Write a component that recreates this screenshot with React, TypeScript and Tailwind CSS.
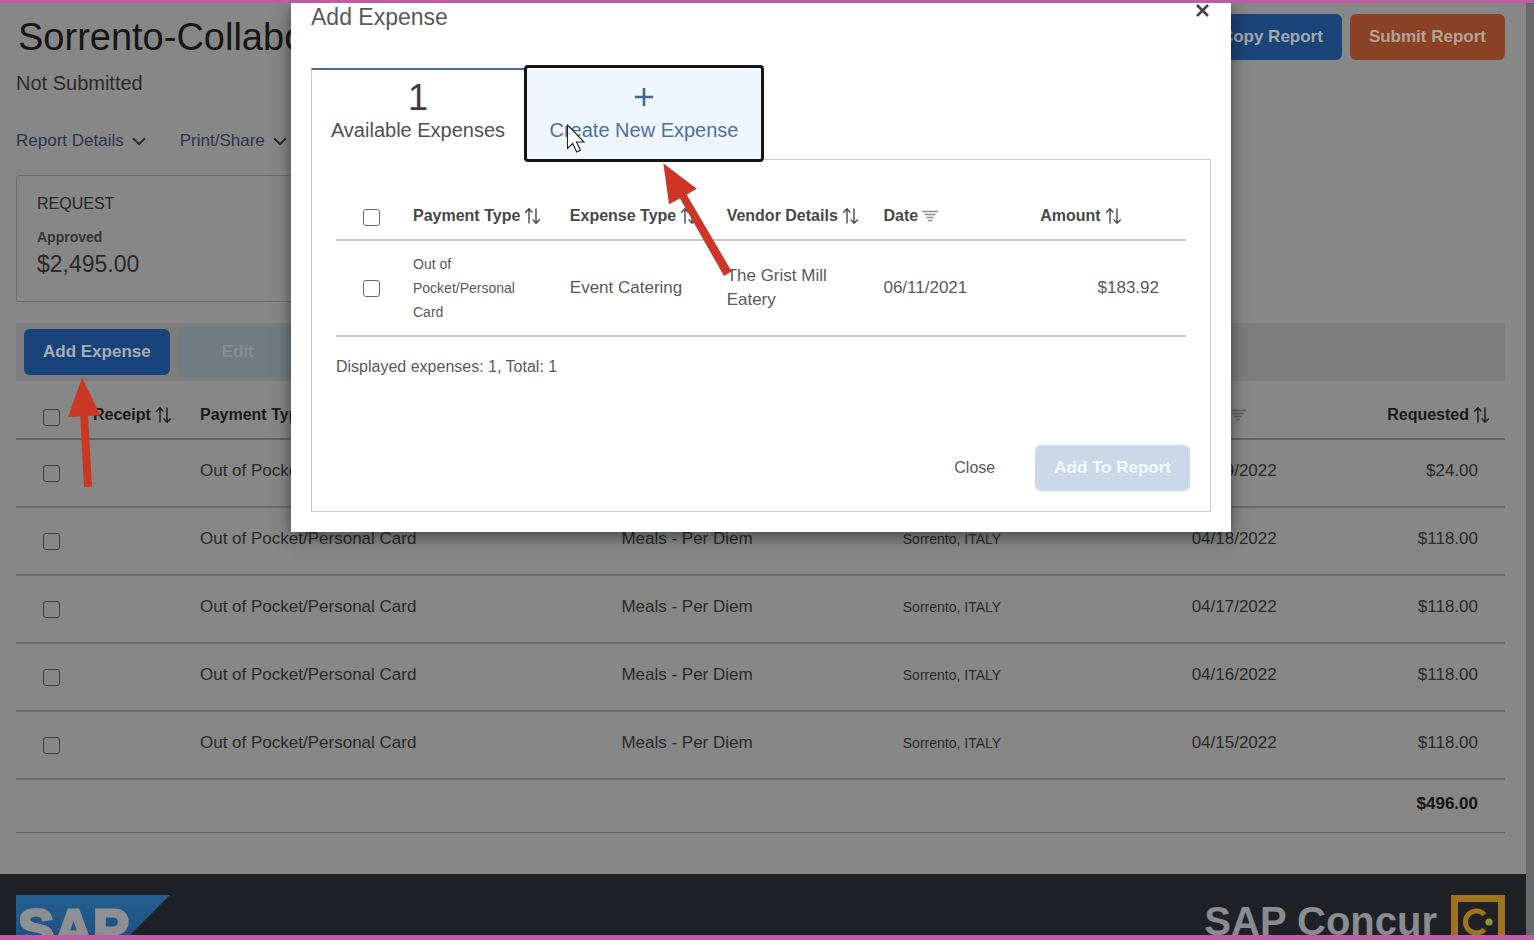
import React from "react";

type Expense = { payment: string; type: string; vendor: string; date: string; amount: string };

const perDiem = (date: string, amount = "$118.00"): Expense => ({
  payment: "Out of Pocket/Personal Card",
  type: "Meals - Per Diem",
  vendor: "Sorrento, ITALY",
  date,
  amount,
});

const expenses: Expense[] = [
  perDiem("04/19/2022", "$24.00"),
  perDiem("04/18/2022"),
  perDiem("04/17/2022"),
  perDiem("04/16/2022"),
  perDiem("04/15/2022"),
];

function SortIcon() {
  return (
    <svg width="17" height="18" viewBox="0 0 17 18" fill="none" stroke="currentColor" strokeWidth="1.4" aria-hidden="true">
      <path d="M5 16.5V2M1.2 5.8L5 1.8l3.4 3.8" />
      <path d="M12 1.5V16M8.6 12.4l3.4 3.8 3.8-3.8" />
    </svg>
  );
}

function FilterIcon() {
  return (
    <svg width="16" height="14" viewBox="0 0 16 14" fill="none" stroke="currentColor" strokeWidth="1.4" aria-hidden="true">
      <path d="M0 2.5h16M2.5 5.5h11M4.5 8.5h7M6 11.5h4" />
    </svg>
  );
}

function Chevron() {
  return (
    <svg width="14" height="9" viewBox="0 0 14 9" fill="none" stroke="#262b33" strokeWidth="2" aria-hidden="true">
      <path d="M1 1.2l6 6 6-6" />
    </svg>
  );
}

function Tick({ label, dim = false }: { label: string; dim?: boolean }) {
  return (
    <input
      type="checkbox"
      aria-label={label}
      className={
        dim
          ? "block size-[17px] appearance-none rounded-[3px] border border-[#3c3c3c]"
          : "block size-[17px] appearance-none rounded-[3px] border border-[#6a6a6a] bg-white"
      }
    />
  );
}

function Heading({ children, icon }: { children: React.ReactNode; icon: "sort" | "filter" }) {
  return (
    <span className="inline-flex items-center gap-1 whitespace-nowrap">
      {children}
      {icon === "sort" ? <SortIcon /> : <span className="text-[#8c8c8c]"><FilterIcon /></span>}
    </span>
  );
}

function ReportPage() {
  return (
    <main className="shrink-0 pr-[21px] pl-4 pt-[11px]">
      <header className="flex items-center justify-between">
        <h1 className="pl-[2px] text-[38px] leading-[46px] text-[#161616]">Sorrento-Collaboration</h1>
        <div className="flex gap-2">
          <button className="h-[46px] rounded-md bg-[#1b4478] px-[19px] text-[17px] font-bold text-[#a3a8af]">Copy Report</button>
          <button className="h-[46px] rounded-md bg-[#8a4324] px-[19px] text-[17px] font-bold text-[#b5a297]">Submit Report</button>
        </div>
      </header>
      <p className="mt-[11px] text-xl leading-6 text-[#2b2b2b]">Not Submitted</p>
      <nav className="mt-[34px] flex gap-[34px] text-[17px] leading-6 text-[#27364f]">
        <a href="#details" className="flex items-center gap-2">Report Details <Chevron /></a>
        <a href="#print" className="flex items-center gap-2">Print/Share <Chevron /></a>
      </nav>
      <section className="mt-[22px] w-1/3 rounded-[3px] border border-[#6d6d6d] px-5 pt-4 pb-5 text-[#2a2a2a]">
        <h2 className="text-base leading-6 text-[#262626]">REQUEST</h2>
        <p className="mt-[11px] text-sm leading-5 font-bold text-[#353535]">Approved</p>
        <p className="text-[23px] leading-[34px]">$2,495.00</p>
      </section>
      <div className="mt-[21px] flex h-[58px] items-center gap-2 bg-[#7d7d7d] px-2">
        <button className="h-[46px] rounded-md bg-[#17437a] px-[19px] text-[17px] font-bold text-[#a9adb2]">Add Expense</button>
        <button disabled className="h-[50px] w-[120px] rounded-md bg-[#727a84] text-[17px] font-bold text-[#868d95]">Edit</button>
      </div>
      <table className="w-full table-fixed text-left text-base text-[#2a2a2a]">
        <colgroup>
          <col className="w-[77px]" />
          <col className="w-[107px]" />
          <col className="w-[28.3%]" />
          <col className="w-[18.9%]" />
          <col className="w-[19.4%]" />
          <col className="w-[10%]" />
          <col />
        </colgroup>
        <thead>
          <tr className="h-[58px] border-b-2 border-[#646464] text-base text-[#1a1a1a]">
            <th className="pt-4 pl-[27px]"><Tick dim label="Select all expenses" /></th>
            <th className="pt-2.5"><Heading icon="sort">Receipt</Heading></th>
            <th className="pt-2.5"><Heading icon="sort">Payment Type</Heading></th>
            <th className="pt-2.5"><Heading icon="sort">Expense Type</Heading></th>
            <th className="pt-2.5"><Heading icon="sort">Vendor Details</Heading></th>
            <th className="pt-2.5"><span className="[&_span_span]:text-[#5c5c5c]"><Heading icon="filter">Date</Heading></span></th>
            <th className="pt-2.5 pr-[15px] text-right"><Heading icon="sort">Requested</Heading></th>
          </tr>
        </thead>
        <tbody>
          {expenses.map((e) => (
            <tr key={e.date} className="h-[68px] border-b-2 border-[#6a6a6a] text-[17px]">
              <td className="pl-[27px]"><Tick dim label={"Select expense of " + e.date} /></td>
              <td />
              <td className="pb-1">{e.payment}</td>
              <td className="pb-1">{e.type}</td>
              <td className="pb-1 text-sm">{e.vendor}</td>
              <td className="pb-1">{e.date}</td>
              <td className="pr-[27px] pb-1 text-right">{e.amount}</td>
            </tr>
          ))}
        </tbody>
        <tfoot>
          <tr className="h-[53px] border-b border-[#646464] text-[17px] font-bold text-[#141414]">
            <td colSpan={7} className="pr-[27px] pb-1 text-right">$496.00</td>
          </tr>
        </tfoot>
      </table>
    </main>
  );
}

function Footer() {
  return (
    <footer className="mt-[41px] flex min-h-0 flex-1 items-start justify-between overflow-hidden bg-[#1e2125] pt-[21px] pr-[21px] pl-4">
      <svg className="shrink-0" width="154" height="77" viewBox="0 0 154 77" role="img" aria-label="SAP">
        <defs>
          <linearGradient id="sap" x1="0" y1="0" x2="0" y2="1">
            <stop offset="0" stopColor="#235f91" />
            <stop offset="1" stopColor="#1a4673" />
          </linearGradient>
        </defs>
        <path d="M0 0h154L77 77H0z" fill="url(#sap)" />
        <text x="2" y="52" fontFamily="Liberation Sans, sans-serif" fontWeight="700" fontSize="54" fill="#8e8f92" stroke="#8e8f92" strokeWidth="3">SAP</text>
      </svg>
      <div className="flex shrink-0 items-start gap-[14px]">
        <span className="pt-[6px] text-[40px] leading-10 font-bold text-[#8b8c8f]">SAP Concur</span>
        <svg width="54" height="54" viewBox="0 0 54 54" role="img" aria-label="Concur">
          <rect x="3.5" y="3.5" width="47" height="47" fill="none" stroke="#a0741e" strokeWidth="7" />
          <path d="M33.5 19.5a11 11 0 1 0 0 15" fill="none" stroke="#a0741e" strokeWidth="5" />
          <circle cx="38" cy="27" r="3.6" fill="#8f9a26" />
        </svg>
      </div>
    </footer>
  );
}

function AddExpenseDialog() {
  return (
    <section
      role="dialog"
      aria-label="Add Expense"
      className="absolute top-[3px] right-[303px] left-[291px] bg-white px-5 pb-5 text-[#595959] shadow-[0_4px_16px_rgba(0,0,0,0.5)]"
    >
      <header className="flex h-[65px] items-start justify-between">
        <h2 className="text-[23px] leading-7">Add Expense</h2>
        <button aria-label="Close dialog" className="pt-[1px] pr-[2px] text-[#444]">
          <svg width="13" height="13" viewBox="0 0 13 13" fill="none" stroke="currentColor" strokeWidth="2.6">
            <path d="M1 1l11 11M12 1L1 12" />
          </svg>
        </button>
      </header>
      <div role="tablist" className="relative z-10 flex items-end gap-[3px]">
        <button role="tab" aria-selected="true" className="flex h-[92px] w-[213px] flex-col items-center border-t-2 border-l border-t-[#486c94] border-l-[#ccc] bg-white pt-2 text-[#505050]">
          <span className="text-4xl leading-10 text-[#3c3c3c]">1</span>
          <span className="text-xl leading-6">Available Expenses</span>
        </button>
        <button role="tab" aria-selected="false" className="mb-[1px] flex h-[91px] w-[234px] flex-col items-center rounded-[1px] bg-[#f0f6fe] pt-5 text-[#4f6f9c] outline-3 outline-[#141414]">
          <svg width="18" height="18" viewBox="0 0 18 18" fill="none" stroke="#3f6695" strokeWidth="2.6" aria-hidden="true">
            <path d="M9 0v18M0 9h18" />
          </svg>
          <span className="mt-[12px] text-xl leading-6">Create New Expense</span>
        </button>
      </div>
      <div role="tabpanel" className="-mt-px border border-[#ccc] pb-5">
        <div className="px-6 pt-8">
          <table className="w-full table-fixed text-left text-[17px] leading-6">
            <colgroup>
              <col className="w-[77px]" />
              <col className="w-[18.45%]" />
              <col className="w-[18.45%]" />
              <col className="w-[18.45%]" />
              <col className="w-[18.45%]" />
              <col />
            </colgroup>
            <thead>
              <tr className="h-12 border-b-2 border-[#c6c6c6] text-base text-[#484848]">
                <th className="pt-1 pl-[27px]"><Tick label="Select all available expenses" /></th>
                <th><Heading icon="sort">Payment Type</Heading></th>
                <th><Heading icon="sort">Expense Type</Heading></th>
                <th><Heading icon="sort">Vendor Details</Heading></th>
                <th><Heading icon="filter">Date</Heading></th>
                <th><Heading icon="sort">Amount</Heading></th>
              </tr>
            </thead>
            <tbody>
              <tr className="h-24 border-b-2 border-[#c6c6c6]">
                <td className="pl-[27px]"><Tick label="Select Event Catering" /></td>
                <td className="pr-10 text-sm leading-6">Out of Pocket/Personal Card</td>
                <td>Event Catering</td>
                <td className="pr-10">The Grist Mill Eatery</td>
                <td>06/11/2021</td>
                <td className="pr-[27px] text-right">$183.92</td>
              </tr>
            </tbody>
          </table>
          <p className="mt-[18px] text-base leading-6">Displayed expenses: 1, Total: 1</p>
        </div>
        <div className="mt-[66px] flex items-center justify-end gap-10 pr-5">
          <button className="text-base">Close</button>
          <button disabled className="h-[46px] rounded-md bg-[#cbd8e7] px-[19px] text-[17px] font-bold text-[#f3f8fd]">Add To Report</button>
        </div>
      </div>
    </section>
  );
}

function Annotations() {
  return (
    <>
      <svg className="absolute top-[124px] left-[566px] z-20" width="20" height="30" viewBox="0 0 20 30" aria-hidden="true">
        <path d="M1.5 1v23.5l5.2-5 4 8.5 3.8-1.8-4-8.2h7.5z" fill="#fff" stroke="#222" strokeWidth="1.1" />
      </svg>
      <svg className="absolute top-[377px] left-[66px] z-20" width="36" height="112" viewBox="0 0 36 112" aria-hidden="true">
        <path d="M16 1L2 40l12.3-.6L18 110l8-.4L22 39l12.5-.6z" fill="#cb3625" />
      </svg>
      <svg className="absolute top-[162px] left-[662px] z-20" width="72" height="116" viewBox="0 0 72 116" aria-hidden="true">
        <path d="M1.3 1.3L7 42.3l11-5.8L62 114l7.7-4.6-45-76.7 10-6z" fill="#cb3625" />
      </svg>
    </>
  );
}

export default function App() {
  return (
    <div className="relative flex h-screen overflow-hidden border-t-3 border-b-5 border-[#bf5ca5] bg-[#696969] font-['Liberation_Sans',Arial,sans-serif]">
      <div className="mr-2 flex min-w-0 flex-1 flex-col bg-[#878787]">
        <ReportPage />
        <Footer />
      </div>
      <div className="absolute inset-x-0 -top-[3px]">
        <AddExpenseDialog />
        <Annotations />
      </div>
    </div>
  );
}
